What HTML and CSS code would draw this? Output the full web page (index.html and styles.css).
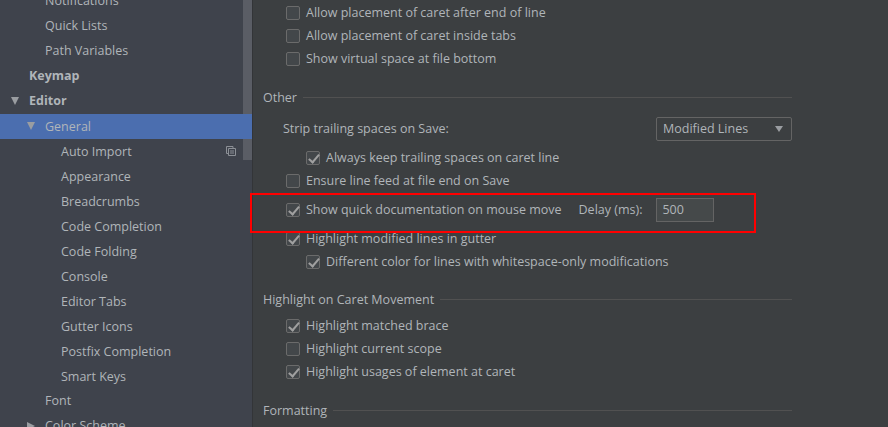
FILE: index.html
```html
<!DOCTYPE html>
<html lang="en">
<head>
    <meta charset="UTF-8">
    <title>Settings</title>
    <link rel="stylesheet" href="styles.css">
</head>
<body>
    <aside class="sidebar">
        <div class="scrollbar"></div>
        <ul class="tree">
            <li class="item lvl1">Notifications</li>
            <li class="item lvl1">Quick Lists</li>
            <li class="item lvl1">Path Variables</li>
            <li class="item lvl0 bold">Keymap</li>
            <li class="item lvl0 bold"><span class="arrow down"></span>Editor</li>
            <li class="item lvl1 selected"><span class="arrow down"></span>General</li>
            <li class="item lvl2">Auto Import
                <svg class="copy-icon" width="10" height="10" viewBox="0 0 10 10" fill="none" stroke="#8c9096">
                    <path d="M2.5 7.5H.5V.5h6.500v2"/>
                    <path d="M2.500 2.500h7v7h-7z"/>
                    <path d="M4 5h4M4 7h4"/>
                </svg>
            </li>
            <li class="item lvl2">Appearance</li>
            <li class="item lvl2">Breadcrumbs</li>
            <li class="item lvl2">Code Completion</li>
            <li class="item lvl2">Code Folding</li>
            <li class="item lvl2">Console</li>
            <li class="item lvl2">Editor Tabs</li>
            <li class="item lvl2">Gutter Icons</li>
            <li class="item lvl2">Postfix Completion</li>
            <li class="item lvl2">Smart Keys</li>
            <li class="item lvl1">Font</li>
            <li class="item lvl1"><span class="arrow right"></span>Color Scheme</li>
        </ul>
    </aside>

    <main class="panel">
        <div class="row"><span class="check"></span>Allow placement of caret after end of line</div>
        <div class="row"><span class="check"></span>Allow placement of caret inside tabs</div>
        <div class="row"><span class="check"></span>Show virtual space at file bottom</div>

        <div class="group first">Other</div>
        <div class="row-select">
            <span>Strip trailing spaces on Save:</span>
            <div class="select">Modified Lines<span class="select-arrow"></span></div>
        </div>
        <div class="row sub"><span class="check on"></span>Always keep trailing spaces on caret line</div>
        <div class="row"><span class="check"></span>Ensure line feed at file end on Save</div>
        <div class="row row-delay">
            <span class="check on"></span>Show quick documentation on mouse move
            <span class="delay-label">Delay (ms):</span>
            <span class="delay-input">500</span>
        </div>
        <div class="row"><span class="check on"></span>Highlight modified lines in gutter</div>
        <div class="row sub"><span class="check on"></span>Different color for lines with whitespace-only modifications</div>

        <div class="group caret">Highlight on Caret Movement</div>
        <div class="row"><span class="check on"></span>Highlight matched brace</div>
        <div class="row"><span class="check"></span>Highlight current scope</div>
        <div class="row"><span class="check on"></span>Highlight usages of element at caret</div>

        <div class="group">Formatting</div>

        <div class="highlight-box"></div>
    </main>
</body>
</html>
```

FILE: styles.css
```css
* {
    box-sizing: border-box;
}

body {
    margin: 0;
    height: 427px;
    overflow: hidden;
    display: flex;
    font-family: "Open Sans", sans-serif;
    font-size: 12.5px;
    color: #b0b5b9;
    background-color: #3c3f41;
}

/* left tree */
.sidebar {
    position: relative;
    width: 253px;
    flex-shrink: 0;
    background-color: #3f434c;
    border-right: 1px solid #333538;
}

.scrollbar {
    position: absolute;
    top: 0;
    right: 0;
    width: 9px;
    height: 160px;
    background-color: rgba(255, 255, 255, 0.14);
}

.tree {
    list-style: none;
    margin: -11px 0 0;
    padding: 0;
}

.item {
    position: relative;
    height: 25px;
    line-height: 23px;
    white-space: nowrap;
}

.lvl0 { padding-left: 29px; }
.lvl1 { padding-left: 45px; }
.lvl2 { padding-left: 61px; line-height: 25px; }

.bold {
    font-weight: 700;
}

.selected {
    line-height: 25px;
    background-color: #4b6eaf;
}

.arrow {
    position: absolute;
    top: 8px;
    left: 11px;
    border-style: solid;
    border-color: transparent;
}

.lvl1 .arrow {
    left: 27px;
}

.arrow.down {
    border-width: 8px 4.500px 0;
    border-top-color: #9a9da1;
}

.arrow.right {
    border-width: 4.500px 0 4.500px 8px;
    border-left-color: #9a9da1;
}

.copy-icon {
    position: absolute;
    top: 7px;
    left: 226px;
}

/* settings */
.panel {
    position: relative;
    flex: 1;
    padding: 1px 96px 0 10px;
}

.row {
    display: flex;
    align-items: center;
    height: 23px;
    padding-left: 23px;
    white-space: nowrap;
}

.row.sub {
    padding-left: 43px;
}

.check {
    position: relative;
    width: 14px;
    height: 14px;
    margin-right: 6px;
    flex-shrink: 0;
    border: 1px solid #6b6b6b;
    border-radius: 2px;
    background-color: #43474a;
}

.check.on::after {
    content: "";
    position: absolute;
    left: 4px;
    top: 0;
    width: 4px;
    height: 9px;
    border: solid #a0a0a0;
    border-width: 0 2px 2px 0;
    transform: rotate(40deg);
}

.group {
    display: flex;
    align-items: center;
    height: 20px;
    margin-top: 17px;
    margin-bottom: 5px;
    white-space: nowrap;
}

.group.first {
    margin-bottom: 9px;
}

.group.caret {
    margin-top: 16px;
}

.group::after {
    content: "";
    flex: 1;
    height: 1px;
    margin-left: 6px;
    background-color: #515151;
}

.row-select {
    display: flex;
    align-items: center;
    justify-content: space-between;
    height: 25px;
    margin-bottom: 5px;
    padding-left: 20px;
}

.select {
    display: flex;
    align-items: center;
    justify-content: space-between;
    width: 136px;
    height: 24px;
    padding: 0 8px 0 6px;
    border: 1px solid #646464;
    border-radius: 2px;
}

.select-arrow {
    border-style: solid;
    border-color: transparent;
    border-width: 6px 4px 0;
    border-top-color: #9a9da1;
}

.row-delay {
    height: 25px;
    margin-top: 5px;
    margin-bottom: 5px;
}

.delay-label {
    margin-left: 17px;
    margin-right: 14px;
}

.delay-input {
    width: 58px;
    height: 24px;
    line-height: 22px;
    padding-left: 5px;
    border: 1px solid #646464;
    background-color: #45494a;
}

.highlight-box {
    position: absolute;
    top: 193px;
    left: -3px;
    width: 506px;
    height: 40px;
    border: 2px solid #ff0000;
}
```
